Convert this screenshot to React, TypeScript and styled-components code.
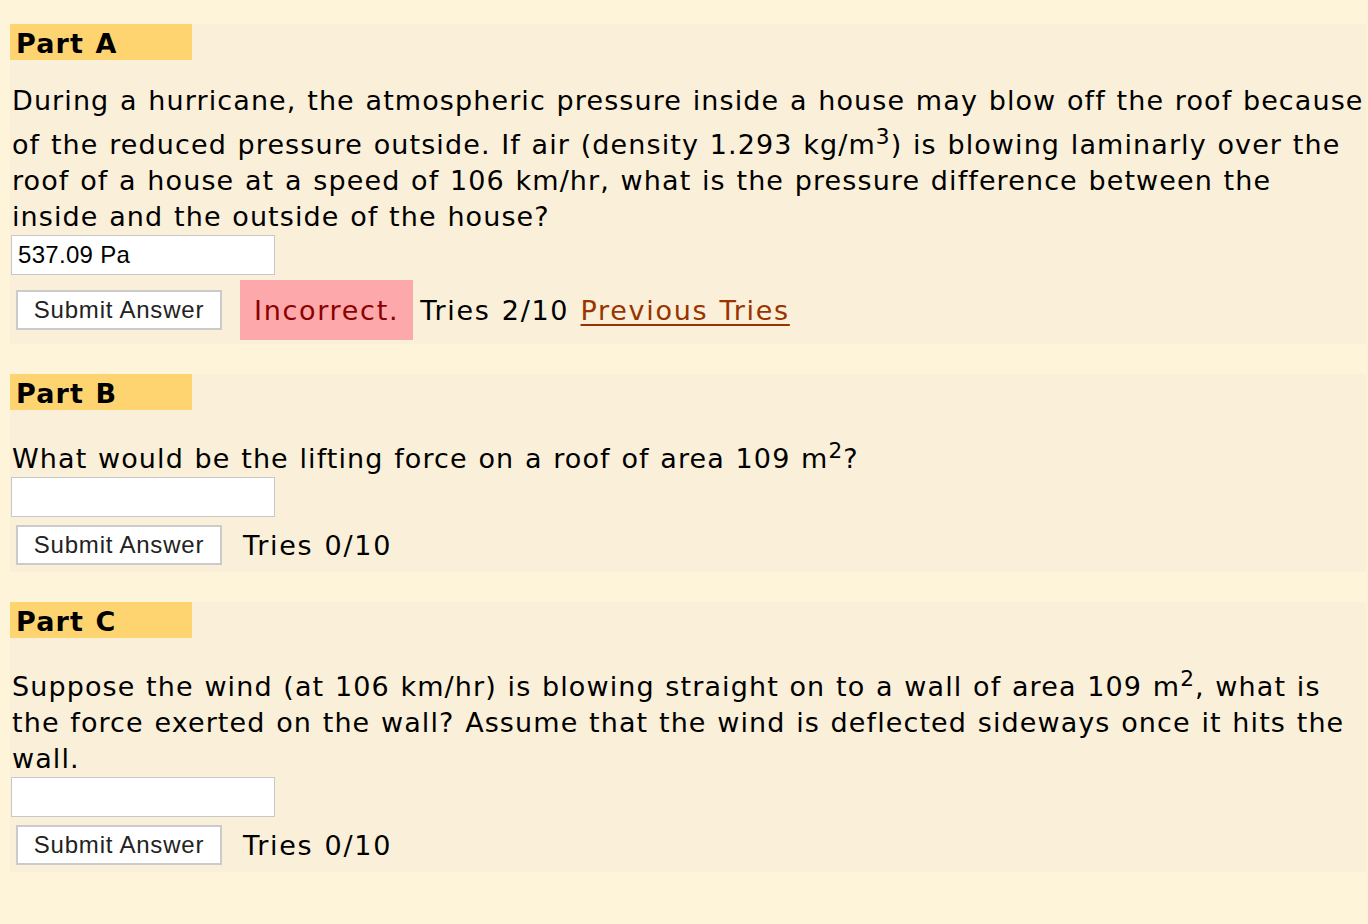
import styled, { createGlobalStyle } from "styled-components";

const GlobalStyle = createGlobalStyle`
    html, body {
        margin: 0;
        padding: 0;
        background-color: #fdf4d9;
    }
    body {
        font-family: "DejaVu Sans", Verdana, sans-serif;
        font-size: 27px;
        letter-spacing: 1.1px;
        word-spacing: 1px;
        color: #000;
    }
`

const Page = styled.div`
    padding: 24px 2px 40px 10px;
    display: flex;
    flex-direction: column;
    gap: 30px;
`

const Section = styled.div`
    background-color: #faefd9;
    padding: 0 0 4px 2px;
    display: flex;
    flex-direction: column;
    align-items: flex-start;
`

const PartLabel = styled.div`
    margin-left: -2px;
    width: 176px;
    height: 36px;
    padding-left: 6px;
    background-color: #fdd470;
    font-weight: bold;
    font-size: 27px;
    line-height: 40px;
`

const Question = styled.div`
    margin-top: 23px;
    line-height: 36px;

    sup {
        font-size: 0.8em;
    }
`

const AnswerInput = styled.input`
    box-sizing: border-box;
    width: 264px;
    height: 40px;
    margin: 0 0 0 -1px;
    padding: 0 6px;
    border: 1px solid #c8c8c8;
    background: #fff;
    font-family: "Liberation Sans", Arial, sans-serif;
    font-size: 24px;
    letter-spacing: 0.3px;
    color: #000;
    outline: none;
`

const Row = styled.div`
    margin-top: 5px;
    min-height: 46px;
    display: flex;
    align-items: center;
    letter-spacing: 1.7px;
`

const SubmitButton = styled.button`
    box-sizing: border-box;
    width: 206px;
    height: 40px;
    margin-left: 4px;
    padding: 0;
    background: #fff;
    border: 2px solid #cbcbcb;
    font-family: "Liberation Sans", Arial, sans-serif;
    font-size: 24px;
    letter-spacing: 0.8px;
    color: #222;
    cursor: pointer;
`

const Feedback = styled.span`
    margin-left: 18px;
    height: 60px;
    padding: 0 14px;
    display: flex;
    align-items: center;
    background-color: #fda8aa;
    color: #8b0000;
`

const Tries = styled.span<{ $gap: number }>`
    margin-left: ${p => p.$gap}px;
`

const PrevLink = styled.a`
    color: #993300;
    text-decoration: underline;
    text-underline-offset: 4px;
    text-decoration-thickness: 2px;
    cursor: pointer;
`

type PartProps = {
    label: string;
    value?: string;
    incorrect?: boolean;
    tries: string;
    children: React.ReactNode;
};

const Part: React.FC<PartProps> = ({ label, value, incorrect, tries, children }) => (
    <Section>
        <PartLabel>{label}</PartLabel>
        <Question>{children}</Question>
        <AnswerInput defaultValue={value ?? ""} />
        <Row>
            <SubmitButton>Submit Answer</SubmitButton>
            {incorrect && <Feedback>Incorrect.</Feedback>}
            <Tries $gap={incorrect ? 7 : 21}>
                Tries {tries}
                {incorrect && <> <PrevLink>Previous Tries</PrevLink></>}
            </Tries>
        </Row>
    </Section>
);

const App: React.FC = () => {
    return (
        <>
            <GlobalStyle />
            <Page>
                <Part label="Part A" value="537.09 Pa" incorrect tries="2/10">
                    During a hurricane, the atmospheric pressure inside a house may blow off the roof because
                    of the reduced pressure outside. If air (density 1.293 kg/m<sup>3</sup>) is blowing laminarly over the
                    roof of a house at a speed of 106 km/hr, what is the pressure difference between the
                    inside and the outside of the house?
                </Part>
                <Part label="Part B" tries="0/10">
                    What would be the lifting force on a roof of area 109 m<sup>2</sup>?
                </Part>
                <Part label="Part C" tries="0/10">
                    Suppose the wind (at 106 km/hr) is blowing straight on to a wall of area 109 m<sup>2</sup>, what is
                    the force exerted on the wall? Assume that the wind is deflected sideways once it hits the
                    wall.
                </Part>
            </Page>
        </>
    );
};

export default App;
